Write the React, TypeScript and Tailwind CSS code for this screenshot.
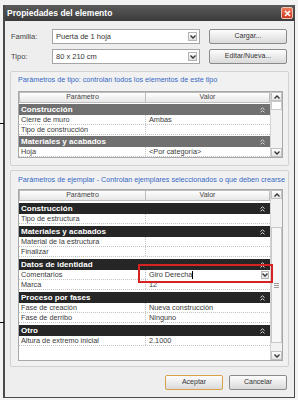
import React from "react";

type Row =
  | { kind: "group"; label: string }
  | { kind: "row"; label: string; value?: string; edit?: boolean };

const typeRows: Row[] = [
  { kind: "group", label: "Construcción" },
  { kind: "row", label: "Cierre de muro", value: "Ambas" },
  { kind: "row", label: "Tipo de construcción" },
  { kind: "group", label: "Materiales y acabados" },
  { kind: "row", label: "Hoja", value: "<Por categoría>" },
];

const instanceRows: Row[] = [
  { kind: "group", label: "Construcción" },
  { kind: "row", label: "Tipo de estructura" },
  { kind: "group", label: "Materiales y acabados" },
  { kind: "row", label: "Material de la estructura" },
  { kind: "row", label: "Finalizar" },
  { kind: "group", label: "Datos de identidad" },
  { kind: "row", label: "Comentarios", value: "Giro Derecha", edit: true },
  { kind: "row", label: "Marca", value: "12" },
  { kind: "group", label: "Proceso por fases" },
  { kind: "row", label: "Fase de creación", value: "Nueva construcción" },
  { kind: "row", label: "Fase de derribo", value: "Ninguno" },
  { kind: "group", label: "Otro" },
  { kind: "row", label: "Altura de extremo inicial", value: "2.1000" },
];

function Chevron({ up }: { up?: boolean }) {
  return (
    <svg width="6" height="4" viewBox="0 0 6 4">
      <path
        d={up ? "M0.5 3.5 L3 1 L5.5 3.5" : "M0.5 0.5 L3 3 L5.5 0.5"}
        fill="none"
        stroke="#333"
        strokeWidth="1.3"
      />
    </svg>
  );
}

function CollapseIcon() {
  return (
    <svg width="5" height="6" viewBox="0 0 5 6">
      <path d="M0.5 2.5 L2.5 0.8 L4.5 2.5 M0.5 5.3 L2.5 3.6 L4.5 5.3" fill="none" stroke="#d8d8d8" strokeWidth="1" />
    </svg>
  );
}

function Combo({ text }: { text: string }) {
  return (
    <div className="w-[148px] h-[15px] border border-[#a5a5a5] bg-white flex items-center pl-[3px] pr-[2px]">
      <span className="flex-1 text-[7.5px] text-[#333]">{text}</span>
      <div className="w-[9px] h-[9px] border border-[#b5b5b5] bg-gradient-to-b from-white to-[#dedede] flex items-center justify-center">
        <Chevron />
      </div>
    </div>
  );
}

function Button({ label, w, focus }: { label: string; w: string; focus?: boolean }) {
  return (
    <div
      className={`${w} h-[15px] rounded-[2px] border ${
        focus ? "border-[#d9a24a]" : "border-[#8a8a8a]"
      } bg-gradient-to-b from-[#fdfdfd] to-[#dadada] flex items-center justify-center text-[7px] text-[#333]`}
    >
      {label}
    </div>
  );
}

function ScrollBtn({ up }: { up?: boolean }) {
  return (
    <div className="h-[9px] border border-[#c2c2c2] bg-gradient-to-b from-white to-[#e4e4e4] flex items-center justify-center">
      <Chevron up={up} />
    </div>
  );
}

function PropTable({
  rows,
  groupBg,
  height,
  gap,
  thumb,
}: {
  rows: Row[];
  groupBg: string;
  height: string;
  gap: string;
  thumb: React.ReactNode;
}) {
  return (
    <div className={`w-[265px] ${height} border border-[#a8a8a8] flex`}>
      <div className="w-[251px] h-full bg-white flex flex-col">
        <div className="h-[11px] flex text-[7px] text-[#444] shrink-0">
          <div className="w-[127px] border border-[#bdbdbd] bg-gradient-to-b from-white to-[#e6e6e6] flex items-center justify-center">
            Parámetro
          </div>
          <div className="flex-1 border border-l-0 border-[#bdbdbd] bg-gradient-to-b from-white to-[#e6e6e6] flex items-center justify-center">
            Valor
          </div>
        </div>
        {rows.map((r, i) =>
          r.kind === "group" ? (
            <div
              key={i}
              className={`${gap} h-[11px] shrink-0 ${groupBg} flex items-center pl-[2px] pr-[5px] text-[8px] font-bold text-white`}
            >
              <span className="flex-1">{r.label}</span>
              <CollapseIcon />
            </div>
          ) : (
            <div key={i} className="h-[10px] shrink-0 flex border-b border-dotted border-[#c4c4c4] text-[7.3px] text-[#3a3a3a]">
              <div className="w-[127px] pl-[2px] border-r border-dotted border-[#c4c4c4] leading-[9px]">{r.label}</div>
              <div className="flex-1 pl-[3px] leading-[9px] flex items-center">
                {r.edit ? (
                  <div className="flex-1 h-[10px] flex items-center bg-white">
                    <span className="flex-1">
                      {r.value}
                      <span className="inline-block w-[1px] h-[8px] bg-black align-middle" />
                    </span>
                    <div className="w-[8px] h-[8px] mr-[1px] border border-[#b5b5b5] bg-gradient-to-b from-white to-[#dedede] flex items-center justify-center">
                      <Chevron />
                    </div>
                  </div>
                ) : (
                  r.value
                )}
              </div>
            </div>
          )
        )}
      </div>
      <div className="w-[12px] h-full bg-[#f2f2f2] border-l border-[#d4d4d4] flex flex-col">
        <ScrollBtn up />
        <div className="flex-1 flex flex-col">{thumb}</div>
        <ScrollBtn />
      </div>
    </div>
  );
}

export default function App() {
  return (
    <div className="relative w-[298px] h-[400px] overflow-hidden bg-[#f3f3f3] pt-[5px] pl-[3px] pr-[3px] font-['Liberation_Sans',Arial,sans-serif]">
      <div className="h-[393px] flex flex-col border-l-2 border-r border-b border-[#4a4a4a]">
        {/* title bar */}
        <div className="h-[16px] shrink-0 bg-gradient-to-b from-[#5c5c5c] to-[#3b3b3b] flex items-center pl-[2px] pr-[1px]">
          <span className="flex-1 text-[8.5px] font-bold text-white">Propiedades del elemento</span>
          <div className="w-[12px] h-[12px] rounded-[2px] border border-[#f2c2b5] bg-gradient-to-b from-[#ef7a5a] to-[#cc3116] flex items-center justify-center">
            <svg width="7" height="7" viewBox="0 0 7 7">
              <path d="M1 1 L6 6 M6 1 L1 6" stroke="white" strokeWidth="1.6" />
            </svg>
          </div>
        </div>

        <div className="flex-1 bg-[#eeeeee] flex flex-col">
          <div className="mt-[8px] h-[15px] flex items-center pl-[6px]">
            <span className="w-[41px] text-[7.5px] text-[#444]">Familia:</span>
            <Combo text="Puerta de 1 hoja" />
            <div className="ml-[9px]">
              <Button label="Cargar..." w="w-[78px]" />
            </div>
          </div>
          <div className="mt-[5px] h-[15px] flex items-center pl-[6px]">
            <span className="w-[41px] text-[7.5px] text-[#444]">Tipo:</span>
            <Combo text="80 x 210 cm" />
            <div className="ml-[9px]">
              <Button label="Editar/Nueva..." w="w-[78px]" />
            </div>
          </div>

          {/* type parameters */}
          <div className="mt-[7px] mx-[5px] h-[95px] border border-[#d2d2d2] rounded-[2px] bg-[#f1f1f1] pl-[7px] pt-[3px]">
            <div className="h-[9px] leading-[9px] text-[7.2px] text-[#3568c4]">
              Parámetros de tipo: controlan todos los elementos de este tipo
            </div>
            <div className="mt-[7px]">
              <PropTable
                rows={typeRows}
                groupBg="bg-[#707070]"
                height="h-[67px]"
                gap="mt-[1px]"
                thumb={<div className="h-[9px] bg-white border border-[#c8c8c8]" />}
              />
            </div>
          </div>

          {/* instance parameters */}
          <div className="mt-[4px] mx-[5px] h-[197px] border border-[#d2d2d2] rounded-[2px] bg-[#f1f1f1] pl-[7px] pt-[4px]">
            <div className="h-[9px] leading-[9px] text-[7.2px] text-[#3568c4] whitespace-nowrap">
              Parámetros de ejemplar - Controlan ejemplares seleccionados o que deben crearse
            </div>
            <div className="mt-[5px]">
              <PropTable
                rows={instanceRows}
                groupBg="bg-[#262626]"
                height="h-[172px]"
                gap="mt-[2px]"
                thumb={
                  <div className="mt-[28px] h-[116px] bg-[#f7f7f7] border border-[#c8c8c8] flex flex-col items-center justify-center gap-[1px]">
                    <div className="w-[5px] h-[1px] bg-[#9a9a9a]" />
                    <div className="w-[5px] h-[1px] bg-[#9a9a9a]" />
                    <div className="w-[5px] h-[1px] bg-[#9a9a9a]" />
                  </div>
                }
              />
            </div>
          </div>

          <div className="mt-[8px] flex justify-end gap-[6px] pr-[7px]">
            <Button label="Aceptar" w="w-[58px]" focus />
            <Button label="Cancelar" w="w-[58px]" />
          </div>
        </div>
      </div>

      {/* annotation marks */}
      <div className="absolute left-[138px] top-[264px] w-[135px] h-[19px] border-2 border-[#d42323]" />
      <div className="absolute left-0 top-[123px] w-[4px] h-[1px] bg-black" />
      <div className="absolute left-0 top-[322px] w-[4px] h-[1px] bg-black" />
    </div>
  );
}
